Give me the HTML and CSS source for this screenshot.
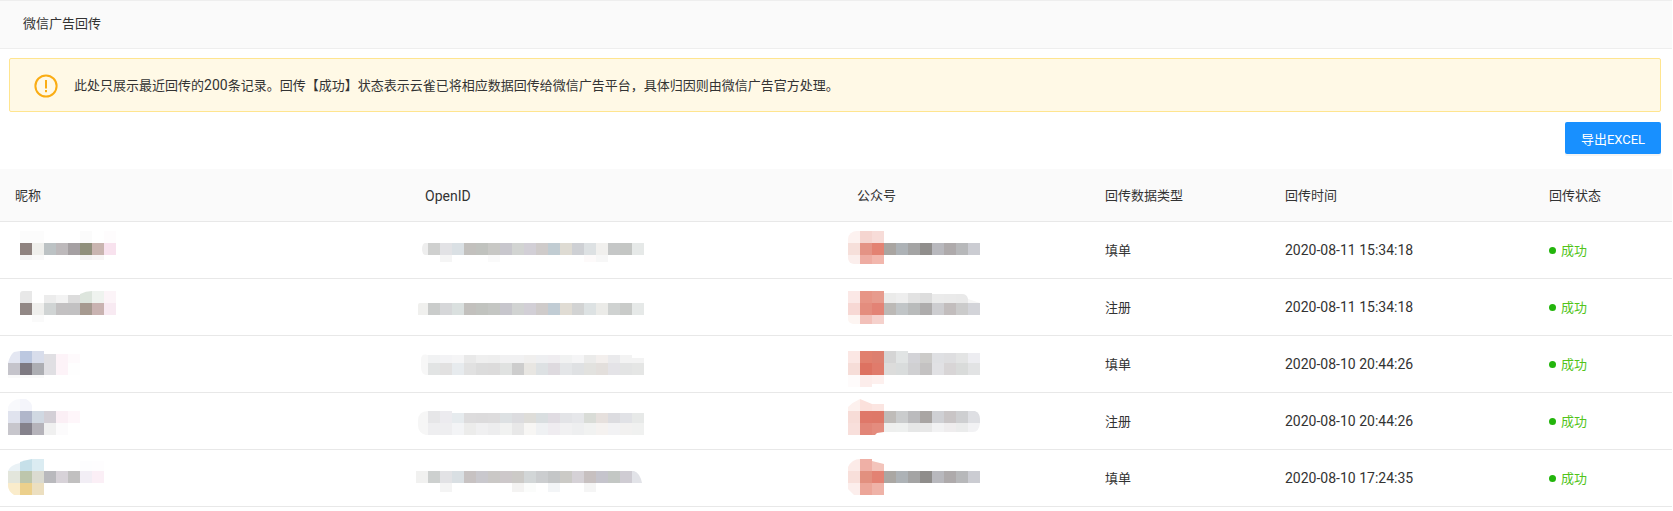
FILE: index.html
```html
<!DOCTYPE html>
<html lang="zh">
<head>
<meta charset="utf-8">
<title>微信广告回传</title>
<link rel="stylesheet" href="styles.css">
</head>
<body>
<div class="page">
  <header class="title-bar">微信广告回传</header>
  <div class="alert">
    <svg class="alert-icon" viewBox="0 0 24 24"><circle cx="12" cy="12" r="10.6" fill="none" stroke="#faad14" stroke-width="2"/><rect x="11" y="6" width="2" height="8.5" fill="#faad14"/><rect x="11" y="16" width="2" height="2.2" fill="#faad14"/></svg>
    <span>此处只展示最近回传的<span class="latin">200</span>条记录。回传【成功】状态表示云雀已将相应数据回传给微信广告平台，具体归因则由微信广告官方处理。</span>
  </div>
  <div class="toolbar"><button class="btn" type="button">导出EXCEL</button></div>
  <table class="table">
    <colgroup><col class="c1"><col class="c2"><col class="c3"><col class="c4"><col class="c5"><col class="c6"></colgroup>
    <thead><tr><th>昵称</th><th><span class="latin">OpenID</span></th><th>公众号</th><th>回传数据类型</th><th>回传时间</th><th>回传状态</th></tr></thead>
    <tbody>
      <tr>
        <td class="blur"><svg class="m" viewBox="0 0 130 56"><rect x="20" y="9" fill="#fcfcfc"/><rect x="32" y="9" fill="#fcfcfc"/><rect x="80" y="9" fill="#fbfbfb"/><rect x="104" y="9" fill="#fefcfd"/><rect x="20" y="21" fill="#8f8380"/><rect x="32" y="21" fill="#efefec"/><rect x="44" y="21" fill="#bcc2c4"/><rect x="56" y="21" fill="#bdb9bb"/><rect x="68" y="21" fill="#a5a0a2"/><rect x="80" y="21" fill="#90907c"/><rect x="92" y="21" fill="#c9b5b0"/><rect x="104" y="21" fill="#f8e2ee"/><rect x="20" y="33" class="h5" fill="#f5f5f5"/><rect x="32" y="33" class="h5" fill="#f9f9f9"/><rect x="80" y="33" class="h5" fill="#f4f3f3"/><rect x="92" y="33" class="h5" fill="#f8f6f6"/></svg></td>
        <td class="blur"><svg class="m" viewBox="410 0 240 56"><path d="M428 21v12h-3a3 6 0 0 1 0-12z" fill="#eeeeee"/><rect x="428" y="21" fill="#cfd0cf"/><rect x="440" y="21" fill="#e2e2e5"/><rect x="452" y="21" fill="#dae0e4"/><rect x="464" y="21" fill="#c2c0bd"/><rect x="476" y="21" fill="#c0c2be"/><rect x="488" y="21" fill="#c8c8c5"/><rect x="500" y="21" fill="#c8c7cd"/><rect x="512" y="21" fill="#d2d4d2"/><rect x="524" y="21" fill="#d2cfd6"/><rect x="536" y="21" fill="#cfcbca"/><rect x="548" y="21" fill="#c1ccd2"/><rect x="560" y="21" fill="#dedbd3"/><rect x="572" y="21" fill="#ced0d4"/><rect x="584" y="21" fill="#dde1e3"/><rect x="596" y="21" fill="#f1f0ee"/><rect x="608" y="21" fill="#c5c7c7"/><rect x="620" y="21" fill="#c4c6c4"/><rect x="632" y="21" fill="#e6e9e8"/><rect x="440" y="33" class="h7" fill="#f5f5f5"/><rect x="488" y="33" class="h7" fill="#fafafa"/><rect x="584" y="33" class="h7" fill="#fdfafa"/><rect x="596" y="33" class="h7" fill="#f7f7f7"/></svg></td>
        <td class="blur"><svg class="m" viewBox="842 0 150 56"><path d="M860 9v12h-12v-4a9 8 0 0 1 9-8z" fill="#fdf2f0"/><rect x="860" y="9" fill="#f5d5d0"/><rect x="872" y="9" fill="#f7dcd8"/><rect x="848" y="21" fill="#f6dfda"/><rect x="860" y="21" fill="#e49385"/><rect x="872" y="21" fill="#e38272"/><rect x="884" y="21" fill="#a9a5a1"/><rect x="896" y="21" fill="#adb2b6"/><rect x="908" y="21" fill="#a4a4a4"/><rect x="920" y="21" fill="#908e8c"/><rect x="932" y="21" fill="#b8b8bd"/><rect x="944" y="21" fill="#aeaaab"/><rect x="956" y="21" fill="#b7b8ba"/><rect x="968" y="21" fill="#cbccd2"/><path d="M848 33h12v9h-6a6 6 0 0 1-6-6z" fill="#fbeeec"/><rect x="860" y="33" class="h9" fill="#eeaca2"/><rect x="872" y="33" class="h9" fill="#f2b7ad"/></svg></td>
        <td>填单</td><td><span class="time">2020-08-11 15:34:18</span></td><td><i class="dot"></i><span class="status">成功</span></td>
      </tr>
      <tr>
        <td class="blur"><svg class="m" viewBox="0 0 130 56"><path d="M20 24v-9a3 3 0 0 1 3-3h9v12z" fill="#e8e8e8"/><rect x="44" y="16" class="h8" fill="#ececec"/><rect x="56" y="16" class="h8" fill="#f3f3f3"/><rect x="68" y="16" class="h8" fill="#dcdcdc"/><path d="M80 24v-9q6-3 12-3v12z" fill="#dde5dd"/><rect x="92" y="12" fill="#eff3ef"/><rect x="104" y="12" fill="#fcf4f8"/><rect x="20" y="24" fill="#928886"/><rect x="32" y="24" fill="#efefed"/><rect x="44" y="24" fill="#d0d4d4"/><rect x="56" y="24" fill="#c3c1c2"/><rect x="68" y="24" fill="#c2c1c2"/><rect x="80" y="24" fill="#a69a90"/><rect x="92" y="24" fill="#c9b3b1"/><rect x="104" y="24" fill="#f8eaf2"/><rect x="32" y="36" class="h7" fill="#fafafa"/></svg></td>
        <td class="blur"><svg class="m" viewBox="410 0 240 56"><path d="M428 24v12h-10v-10a2 2 0 0 1 2-2z" fill="#f0f0ee"/><rect x="428" y="24" fill="#cacccb"/><rect x="440" y="24" fill="#d6d7d9"/><rect x="452" y="24" fill="#dae0df"/><rect x="464" y="24" fill="#c2c0bd"/><rect x="476" y="24" fill="#c1c3bf"/><rect x="488" y="24" fill="#c4c6c3"/><rect x="500" y="24" fill="#c7c6cc"/><rect x="512" y="24" fill="#d1d3d2"/><rect x="524" y="24" fill="#d2cfd6"/><rect x="536" y="24" fill="#cfcbca"/><rect x="548" y="24" fill="#c1ccd4"/><rect x="560" y="24" fill="#e0dcd4"/><rect x="572" y="24" fill="#d2d3d3"/><rect x="584" y="24" fill="#dde2e3"/><rect x="596" y="24" fill="#ebebe8"/><rect x="608" y="24" fill="#cfd2d1"/><rect x="620" y="24" fill="#c9cbc9"/><rect x="632" y="24" fill="#e6e9e8"/></svg></td>
        <td class="blur"><svg class="m" viewBox="842 0 150 56"><rect x="848" y="12" fill="#fbe8e6"/><rect x="860" y="12" fill="#e79586"/><rect x="872" y="12" fill="#e79b8d"/><rect x="884" y="14" class="h10" fill="#ebebea"/><rect x="896" y="14" class="h10" fill="#eeeeee"/><rect x="908" y="14" class="h10" fill="#e2e2e2"/><rect x="920" y="14" class="h10" fill="#dddddd"/><rect x="932" y="15" class="h9" fill="#ebebeb"/><rect x="944" y="15" class="h9" fill="#eaeaea"/><path d="M956 24v-9h6q5 0 6 5v4z" fill="#e9e9e9"/><path d="M968 24v-4l12 4z" fill="#f6f6f6"/><rect x="848" y="24" fill="#f7d8d4"/><rect x="860" y="24" fill="#e48d7e"/><rect x="872" y="24" fill="#e38375"/><rect x="884" y="24" fill="#bcb9b6"/><rect x="896" y="24" fill="#c1c5c7"/><rect x="908" y="24" fill="#b9bbbb"/><rect x="920" y="24" fill="#aeacac"/><rect x="932" y="24" fill="#cdcdd0"/><rect x="944" y="24" fill="#c2bdbd"/><rect x="956" y="24" fill="#cbcbcb"/><rect x="968" y="24" fill="#d3d4d9"/><path d="M848 36h12v9h-7q-5-1-5-5z" fill="#fdf5f2"/><rect x="860" y="36" class="h9" fill="#f2c0b9"/><rect x="872" y="36" class="h9" fill="#f5d1cc"/></svg></td>
        <td>注册</td><td><span class="time">2020-08-11 15:34:18</span></td><td><i class="dot"></i><span class="status">成功</span></td>
      </tr>
      <tr>
        <td class="blur"><svg class="m" viewBox="0 0 130 56"><path d="M8 27q2-8 6-11l6-1v12z" fill="#e4e7f2"/><rect x="20" y="15" fill="#bcc8e0"/><rect x="32" y="15" fill="#d8ddeb"/><rect x="44" y="18" class="h9" fill="#e0dfe3"/><rect x="56" y="18" class="h9" fill="#fdf3f8"/><rect x="68" y="18" class="h9" fill="#fefafc"/><rect x="8" y="27" fill="#c5c4cb"/><rect x="20" y="27" fill="#7e7a82"/><rect x="32" y="27" fill="#adaeb3"/><rect x="44" y="27" fill="#e0dfe3"/><rect x="56" y="27" fill="#fdf3f8"/><rect x="68" y="27" fill="#fefefe"/><rect x="8" y="39" class="h3" fill="#fafafa"/><rect x="20" y="39" class="h3" fill="#fafafa"/><rect x="32" y="39" class="h3" fill="#fafafa"/></svg></td>
        <td class="blur"><svg class="m" viewBox="410 0 240 56"><path d="M428 19v20h-2q-5-1-5-8v-7q0-7 7-5z" fill="#f7f7f7"/><rect x="428" y="19" class="h8" fill="#f1f2f3"/><rect x="440" y="19" class="h8" fill="#f3f3f5"/><rect x="452" y="19" class="h8" fill="#f5f5f6"/><rect x="464" y="19" class="h8" fill="#e9e9e9"/><rect x="476" y="19" class="h8" fill="#efefef"/><rect x="488" y="19" class="h8" fill="#eeeeee"/><rect x="500" y="19" class="h8" fill="#f1f1f2"/><rect x="512" y="19" class="h8" fill="#f1f1f2"/><rect x="524" y="19" class="h8" fill="#f0efee"/><rect x="536" y="19" class="h8" fill="#eeeff1"/><rect x="548" y="19" class="h8" fill="#efedf0"/><rect x="560" y="19" class="h8" fill="#f1f2f2"/><rect x="572" y="19" class="h8" fill="#f5f5f6"/><rect x="584" y="19" class="h8" fill="#ebebea"/><rect x="596" y="19" class="h8" fill="#f3efed"/><rect x="608" y="19" class="h8" fill="#eaeaec"/><rect x="620" y="19" class="h8" fill="#f3f3f3"/><rect x="632" y="22" class="h5" fill="#f3f3f3"/><rect x="428" y="27" fill="#e2e4e4"/><rect x="440" y="27" fill="#e2e1e1"/><rect x="452" y="27" fill="#e7ebee"/><rect x="464" y="27" fill="#e1e1e1"/><rect x="476" y="27" fill="#dcdcdc"/><rect x="488" y="27" fill="#dcdbdb"/><rect x="500" y="27" fill="#e0e2e1"/><rect x="512" y="27" fill="#cdcdcd"/><rect x="524" y="27" fill="#e8e6e2"/><rect x="536" y="27" fill="#dde1e3"/><rect x="548" y="27" fill="#dedadf"/><rect x="560" y="27" fill="#e4e6e8"/><rect x="572" y="27" fill="#dfe1e3"/><rect x="584" y="27" fill="#e2e2df"/><rect x="596" y="27" fill="#e3dfdc"/><rect x="608" y="27" fill="#e4e3e7"/><rect x="620" y="27" fill="#e3e4e4"/><rect x="632" y="27" fill="#e5e6e5"/></svg></td>
        <td class="blur"><svg class="m" viewBox="842 0 150 56"><rect x="848" y="15" fill="#fbe7e4"/><rect x="860" y="15" fill="#e1806e"/><rect x="872" y="15" fill="#dd7f6f"/><rect x="884" y="15" fill="#d5d5d5"/><rect x="896" y="15" fill="#e1e4e4"/><rect x="908" y="17" class="h10" fill="#d3d3d7"/><rect x="920" y="17" class="h10" fill="#cccbc9"/><rect x="932" y="17" class="h10" fill="#dfe0e3"/><rect x="944" y="17" class="h10" fill="#dedee0"/><rect x="956" y="17" class="h10" fill="#e3e4e4"/><rect x="968" y="17" class="h10" fill="#ededf1"/><rect x="848" y="27" fill="#f6ddd8"/><rect x="860" y="27" fill="#dd7261"/><rect x="872" y="27" fill="#e07b6b"/><rect x="884" y="27" fill="#dcdcdb"/><rect x="896" y="27" fill="#d9dcdc"/><rect x="908" y="27" fill="#d0d0d2"/><rect x="920" y="27" fill="#c4c2c2"/><rect x="932" y="27" fill="#e1e1e4"/><rect x="944" y="27" fill="#d8d5d6"/><rect x="956" y="27" fill="#d9dbda"/><rect x="968" y="27" fill="#e2e3e4"/><rect x="848" y="39" fill="#fefbfb"/><rect x="860" y="39" fill="#fcedeb"/><rect x="872" y="39" class="h9" fill="#fdf0ee"/></svg></td>
        <td>填单</td><td><span class="time">2020-08-10 20:44:26</span></td><td><i class="dot"></i><span class="status">成功</span></td>
      </tr>
      <tr>
        <td class="blur"><svg class="m" viewBox="0 0 130 56"><path d="M8 18v-4q4-8 12-8v12z" fill="#f8f9fc"/><path d="M20 18v-12h6q6 3 6 8v4z" fill="#f4f5fb"/><rect x="8" y="18" fill="#e0e3ee"/><rect x="20" y="18" fill="#b0b6ca"/><rect x="32" y="18" fill="#d0d8e2"/><rect x="44" y="18" fill="#d3cfd6"/><rect x="56" y="18" fill="#fbeff5"/><rect x="68" y="18" fill="#fef6fa"/><rect x="8" y="30" fill="#c7c6cc"/><rect x="20" y="30" fill="#85828c"/><rect x="32" y="30" fill="#b5b3ba"/><rect x="44" y="30" fill="#f0f0f0"/><rect x="56" y="30" fill="#fcfbfc"/></svg></td>
        <td class="blur"><svg class="m" viewBox="410 0 240 56"><path d="M428 18v24h-2q-8-2-8-10v-4q0-10 10-10z" fill="#f6f6f6"/><rect x="428" y="18" fill="#e6e6e8"/><rect x="440" y="18" fill="#ecebef"/><rect x="452" y="20" class="h10" fill="#e6ebee"/><rect x="464" y="20" class="h10" fill="#dddcdd"/><rect x="476" y="20" class="h10" fill="#dcdbdc"/><rect x="488" y="20" class="h10" fill="#dddcdd"/><rect x="500" y="20" class="h10" fill="#dde1e3"/><rect x="512" y="20" class="h10" fill="#dcdcdf"/><rect x="524" y="20" class="h10" fill="#deddd9"/><rect x="536" y="20" class="h10" fill="#d9dee0"/><rect x="548" y="20" class="h10" fill="#e0dce2"/><rect x="560" y="20" class="h10" fill="#e3e4e7"/><rect x="572" y="20" class="h10" fill="#e6e7ea"/><rect x="584" y="20" class="h10" fill="#d9dcd7"/><rect x="596" y="20" class="h10" fill="#e6e0dd"/><rect x="608" y="20" class="h10" fill="#dcdce0"/><rect x="620" y="20" class="h10" fill="#e1e2e6"/><rect x="632" y="20" class="h10" fill="#e7e9e8"/><rect x="428" y="30" fill="#eeeef0"/><rect x="440" y="30" fill="#eeeef0"/><rect x="452" y="30" fill="#f3f4f6"/><rect x="464" y="30" fill="#ececeb"/><rect x="476" y="30" fill="#f0f0f1"/><rect x="488" y="30" fill="#ededee"/><rect x="500" y="30" fill="#f1f2f1"/><rect x="512" y="30" fill="#e8e8e8"/><rect x="524" y="30" fill="#f7f6f4"/><rect x="536" y="30" fill="#eff1f3"/><rect x="548" y="30" fill="#efecf0"/><rect x="560" y="30" fill="#f1f1f2"/><rect x="572" y="30" fill="#eeeff0"/><rect x="584" y="30" fill="#f1f2f1"/><rect x="596" y="30" fill="#f5f2f0"/><rect x="608" y="30" fill="#f2f2f4"/><rect x="620" y="30" fill="#f2f1f0"/><rect x="632" y="30" fill="#f0f1f0"/></svg></td>
        <td class="blur"><svg class="m" viewBox="842 0 150 56"><path d="M848 18v-4q5-5 12-8v12z" fill="#fdf1ee"/><path d="M860 18v-12l12 5v7z" fill="#fbe1dc"/><rect x="872" y="11" class="h7" fill="#fbe5e1"/><rect x="848" y="18" fill="#f7dcd7"/><rect x="860" y="18" fill="#df7869"/><rect x="872" y="18" fill="#de7868"/><rect x="884" y="18" fill="#bfbcb9"/><rect x="896" y="18" fill="#cacccd"/><rect x="908" y="18" fill="#bbbbbd"/><rect x="920" y="18" fill="#a9a5a3"/><rect x="932" y="18" fill="#cfd0d4"/><rect x="944" y="18" fill="#c9c5c6"/><rect x="956" y="18" fill="#cecfd1"/><path d="M968 18h7q5 2 5 8v4h-12z" fill="#dedfe3"/><rect x="848" y="30" fill="#f8dfdb"/><rect x="860" y="30" fill="#e28678"/><path d="M872 30h12v9l-7 1-2 2h-3z" fill="#e48c7e"/><rect x="884" y="30" class="h9" fill="#eeefee"/><rect x="896" y="30" class="h9" fill="#eef0ef"/><rect x="908" y="30" class="h9" fill="#e6e7e7"/><rect x="920" y="30" class="h9" fill="#e8e8e8"/><rect x="932" y="30" class="h9" fill="#f2f2f3"/><rect x="944" y="30" class="h9" fill="#efedee"/><rect x="956" y="30" class="h9" fill="#ebecec"/><path d="M968 30h12q-1 9-7 9h-5z" fill="#f2f2f4"/></svg></td>
        <td>注册</td><td><span class="time">2020-08-10 20:44:26</span></td><td><i class="dot"></i><span class="status">成功</span></td>
      </tr>
      <tr>
        <td class="blur"><svg class="m" viewBox="0 0 130 56"><path d="M8 21q2-6 12-8v8z" fill="#eaf2f6"/><path d="M20 21v-9q6-2 12-3v12z" fill="#c6e0e9"/><rect x="32" y="9" fill="#dbecf2"/><rect x="80" y="11" class="h10" fill="#fdfdfe"/><rect x="92" y="11" class="h10" fill="#fefdfe"/><rect x="8" y="21" fill="#e3e6dc"/><rect x="20" y="21" fill="#bdc6ac"/><rect x="32" y="21" fill="#dbdbd1"/><rect x="44" y="21" fill="#b9b9bd"/><rect x="56" y="21" fill="#d7d2d8"/><rect x="68" y="21" fill="#c1c0c0"/><rect x="80" y="21" fill="#f2eef5"/><rect x="92" y="21" fill="#fbeff6"/><path d="M8 33h12v12h-6q-6-4-6-9z" fill="#faeccb"/><rect x="20" y="33" fill="#ecd08c"/><rect x="32" y="33" fill="#ecdfc0"/></svg></td>
        <td class="blur"><svg class="m" viewBox="410 0 240 56"><path d="M428 21v12h-12v-12z" fill="#f1f1f0"/><rect x="428" y="21" fill="#cdd0cf"/><rect x="440" y="21" fill="#e2e2e5"/><rect x="452" y="21" fill="#d9dfe3"/><rect x="464" y="21" fill="#c7c2c2"/><rect x="476" y="21" fill="#c9c8cd"/><rect x="488" y="21" fill="#cac8c6"/><rect x="500" y="21" fill="#cdc8ca"/><rect x="512" y="21" fill="#cccac7"/><rect x="524" y="21" fill="#d2d6d7"/><rect x="536" y="21" fill="#cbcdcf"/><rect x="548" y="21" fill="#c4c6c7"/><rect x="560" y="21" fill="#cbcac6"/><rect x="572" y="21" fill="#d5d1d6"/><rect x="584" y="21" fill="#c7c0c0"/><rect x="596" y="21" fill="#c5c4cc"/><rect x="608" y="21" fill="#c3c7c4"/><rect x="620" y="21" fill="#cfccd3"/><path d="M632 21h2q6 2 8 12h-10z" fill="#e2e3e8"/><rect x="440" y="33" class="h9" fill="#f4f4f4"/><rect x="512" y="33" class="h9" fill="#f4f3f2"/><rect x="524" y="33" class="h9" fill="#fbfcfb"/><rect x="548" y="33" class="h9" fill="#f3f5f7"/><rect x="584" y="33" class="h9" fill="#f5f5f5"/></svg></td>
        <td class="blur"><svg class="m" viewBox="842 0 150 56"><path d="M848 21v-4q4-8 12-8v12z" fill="#fcebe8"/><rect x="860" y="9" fill="#efb0a6"/><path d="M872 21v-10l12 3v7z" fill="#f3c4bb"/><rect x="848" y="21" fill="#f8dfda"/><rect x="860" y="21" fill="#e2907f"/><rect x="872" y="21" fill="#e38273"/><rect x="884" y="21" fill="#aaa7a3"/><rect x="896" y="21" fill="#adb2b6"/><rect x="908" y="21" fill="#a4a4a4"/><rect x="920" y="21" fill="#8f8d8b"/><rect x="932" y="21" fill="#b8b8bd"/><rect x="944" y="21" fill="#aeaaab"/><rect x="956" y="21" fill="#b7b8ba"/><rect x="968" y="21" fill="#cbccd2"/><path d="M848 33h12v12h-6l-6-6z" fill="#fceeec"/><rect x="860" y="33" fill="#eca699"/><rect x="872" y="33" fill="#efb3a8"/></svg></td>
        <td>填单</td><td><span class="time">2020-08-10 17:24:35</span></td><td><i class="dot"></i><span class="status">成功</span></td>
      </tr>
    </tbody>
  </table>
</div>
</body>
</html>
```

FILE: styles.css
```css
* {
  box-sizing: border-box;
}

html, body {
  margin: 0;
  background: #fff;
}

body {
  font-family: Roboto, "Noto Sans CJK SC", sans-serif;
  font-size: 13px;
  color: #333;
}

.page {
  width: 1672px;
}

.title-bar {
  height: 49px;
  padding-left: 23px;
  line-height: 46px;
  background: #fafafa;
  border-top: 1px solid #eee;
  border-bottom: 1px solid #eee;
}

.alert {
  display: flex;
  align-items: center;
  gap: 16px;
  height: 54px;
  margin: 9px 11px 0 9px;
  padding: 0 0 1px 24px;
  background: #fff9e6;
  border: 1px solid #ffe58f;
  border-radius: 2px;
}

.alert-icon {
  width: 24px;
  height: 24px;
  flex: none;
  margin-top: 3px;
}

.latin {
  font-size: 14px;
}

.toolbar {
  display: flex;
  justify-content: flex-end;
  margin-top: 10px;
  padding-right: 11px;
}

.btn {
  width: 96px;
  height: 32px;
  padding: 0;
  font: inherit;
  color: #fff;
  background: #1890ff;
  border: 0;
  border-radius: 2px;
  box-shadow: 0 2px 0 rgba(0, 0, 0, .045);
}

.table {
  width: 1672px;
  margin-top: 15px;
  border-collapse: separate;
  border-spacing: 0;
  table-layout: fixed;
  line-height: 20px;
}

.c1 { width: 410px; }
.c2 { width: 432px; }
.c3 { width: 248px; }
.c4 { width: 180px; }
.c5 { width: 264px; }
.c6 { width: 138px; }

th {
  height: 53px;
  padding: 2px 0 0 15px;
  font-weight: 400;
  text-align: left;
  background: #fafafa;
  border-bottom: 1px solid #e8e8e8;
}

td {
  height: 57px;
  padding: 1px 0 0 15px;
  border-bottom: 1px solid #e8e8e8;
}

td.blur {
  padding: 0;
}

.m {
  display: block;
  height: 56px;
  width: auto;
}

.m rect {
  width: 12px;
  height: 12px;
}

.m rect.h3 { height: 3px; }
.m rect.h5 { height: 5px; }
.m rect.h7 { height: 7px; }
.m rect.h8 { height: 8px; }
.m rect.h9 { height: 9px; }
.m rect.h10 { height: 10px; }

.time {
  font-size: 14px;
}

.status {
  color: #52c41a;
}

.dot {
  display: inline-block;
  width: 7px;
  height: 7px;
  margin: 0 5px 1px 0;
  border-radius: 50%;
  background: #23b50c;
  vertical-align: middle;
}
```
